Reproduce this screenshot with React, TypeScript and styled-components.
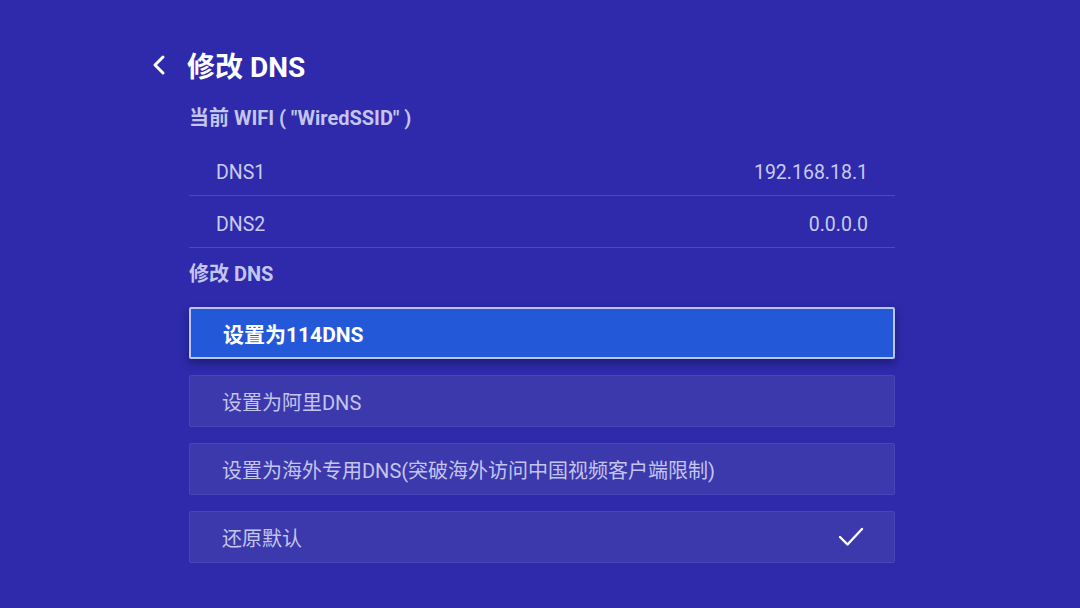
import React, { useState } from 'react';
import styled, { createGlobalStyle } from 'styled-components';

const GlobalStyle = createGlobalStyle`
  html, body {
    margin: 0;
    padding: 0;
    background: #2e2aab;
  }
  body {
    font-family: Roboto, "Noto Sans CJK SC", sans-serif;
  }
`;

const Screen = styled.div`
  width: 1080px;
  height: 608px;
  background: #2e2aab;
  box-sizing: border-box;
  padding: 44px 0 0 148px;
  display: flex;
  flex-direction: column;
  overflow: hidden;
`;

const Header = styled.div`
  display: flex;
  align-items: center;
  gap: 15px;
  height: 42px;
`;

const BackIcon = styled.svg`
  width: 24px;
  height: 24px;
`;

const Title = styled.h1`
  margin: 0;
  color: #ffffff;
  font-size: 28px;
  font-weight: 700;
`;

const Content = styled.div`
  width: 706px;
  margin-left: 41px;
  display: flex;
  flex-direction: column;
`;

const SectionLabel = styled.div<{ $top: number }>`
  color: #c3c5ee;
  font-size: 20px;
  font-weight: 700;
  margin-top: ${p => p.$top}px;
  height: 26px;
  line-height: 26px;
`;

const InfoList = styled.div`
  margin-top: 13px;
`;

const InfoRow = styled.div`
  display: flex;
  justify-content: space-between;
  align-items: center;
  height: 52px;
  box-sizing: border-box;
  padding: 6px 27px 0 27px;
  border-bottom: 1px solid #4a48c4;
  color: #c9caef;
  font-size: 19.5px;
`;

const Options = styled.div`
  display: flex;
  flex-direction: column;
  gap: 16px;
  margin-top: 20px;
`;

const Option = styled.div<{ $active: boolean }>`
  box-sizing: border-box;
  height: 52px;
  display: flex;
  align-items: center;
  justify-content: space-between;
  padding: 0 30px 0 32px;
  font-size: ${p => (p.$active ? 21 : 20)}px;
  cursor: pointer;
  border-radius: 2px;
  background: ${p => (p.$active ? '#2358d9' : '#3c39ad')};
  border: ${p => (p.$active ? '2px solid #b9c6f3' : '1px solid #4846ba')};
  color: ${p => (p.$active ? '#ffffff' : '#c4c5ec')};
  font-weight: ${p => (p.$active ? 700 : 400)};
  box-shadow: ${p => (p.$active ? '0 4px 8px rgba(10, 10, 60, 0.45)' : 'none')};
`;

const CheckIcon = styled.svg`
  width: 26px;
  height: 22px;
`;

const options = [
  '设置为114DNS',
  '设置为阿里DNS',
  '设置为海外专用DNS(突破海外访问中国视频客户端限制)',
  '还原默认',
];

export default function App() {
  const [focused, setFocused] = useState(0);
  const selected = 3;

  return (
    <Screen>
      <GlobalStyle />
      <Header>
        <BackIcon viewBox="0 0 24 24">
          <path d="M15 4 L7 12 L15 20" fill="none" stroke="#ffffff" strokeWidth="3" strokeLinecap="round" strokeLinejoin="round" />
        </BackIcon>
        <Title>修改 DNS</Title>
      </Header>
      <Content>
        <SectionLabel $top={19}>当前 WIFI ( "WiredSSID" )</SectionLabel>
        <InfoList>
          <InfoRow>
            <span>DNS1</span>
            <span>192.168.18.1</span>
          </InfoRow>
          <InfoRow>
            <span>DNS2</span>
            <span>0.0.0.0</span>
          </InfoRow>
        </InfoList>
        <SectionLabel $top={13}>修改 DNS</SectionLabel>
        <Options>
          {options.map((label, i) => (
            <Option key={label} $active={focused === i} onMouseEnter={() => setFocused(i)}>
              <span>{label}</span>
              {selected === i && (
                <CheckIcon viewBox="0 0 26 22">
                  <path d="M2 11 L9.5 18.5 L24 3" fill="none" stroke="#ffffff" strokeWidth="2.4" strokeLinecap="round" strokeLinejoin="round" />
                </CheckIcon>
              )}
            </Option>
          ))}
        </Options>
      </Content>
    </Screen>
  );
}
